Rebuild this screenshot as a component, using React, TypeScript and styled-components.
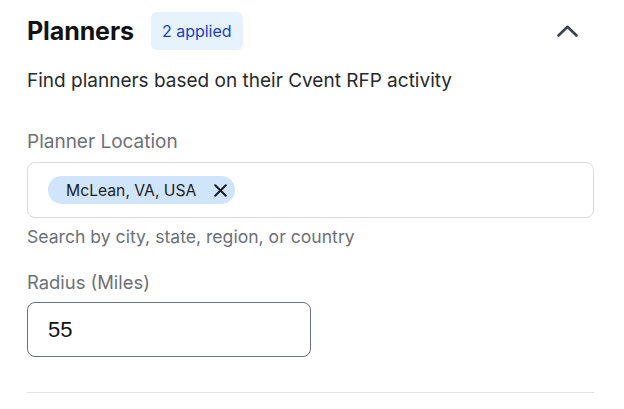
import React, { useState } from 'react';
import styled, { createGlobalStyle } from 'styled-components';

const GlobalStyle = createGlobalStyle`
  * {
    box-sizing: border-box;
  }
  body {
    margin: 0;
    background: #ffffff;
    font-family: Inter, 'Noto Sans', sans-serif;
  }
`;

const Panel = styled.section`
  padding: 12px 30px 0 27px;
  display: flex;
  flex-direction: column;
`;

const Header = styled.div`
  display: flex;
  align-items: center;
  height: 38px;
`;

const Title = styled.h2`
  margin: 0;
  font-size: 25px;
  font-weight: 700;
  color: #111214;
  letter-spacing: -0.1px;
`;

const Badge = styled.span`
  margin-left: 17px;
  height: 38px;
  padding: 0 11px;
  display: inline-flex;
  align-items: center;
  border-radius: 6px;
  background: #e6f3fd;
  color: #1c3ec6;
  font-size: 16px;
`;

const ToggleButton = styled.button`
  margin-left: auto;
  margin-right: 16px;
  border: none;
  background: none;
  padding: 0;
  display: flex;
  cursor: pointer;
`;

const Description = styled.p`
  margin: 19px 0 0;
  font-size: 19px;
  line-height: 24px;
  color: #26292e;
`;

const Field = styled.div<{ $top: number }>`
  margin-top: ${(p) => p.$top}px;
  display: flex;
  flex-direction: column;
`;

const Label = styled.label<{ $size: number }>`
  font-size: ${(p) => p.$size}px;
  line-height: 24px;
  color: #6b7079;
  margin-bottom: 8px;
`;

const TagInput = styled.div`
  height: 56px;
  border: 1.5px solid #d9dbdf;
  border-radius: 8px;
  display: flex;
  align-items: center;
  padding: 0 20px;
`;

const Chip = styled.span`
  height: 28px;
  display: inline-flex;
  align-items: center;
  padding: 0 8px 0 18px;
  border-radius: 14px;
  background: #d0e4fb;
  color: #1c1e22;
  font-size: 15.7px;
`;

const ChipRemove = styled.button`
  margin-left: 18px;
  border: none;
  background: none;
  padding: 0;
  display: flex;
  cursor: pointer;
`;

const Helper = styled.span`
  margin-top: 7px;
  font-size: 17.6px;
  line-height: 24px;
  color: #6b7079;
`;

const NumberInput = styled.input`
  width: 284px;
  height: 55px;
  border: 1.5px solid #6b7079;
  border-radius: 8px;
  padding: 0 20px;
  font-family: 'Liberation Sans', Arial, sans-serif;
  font-size: 22px;
  color: #111;
  outline: none;
`;

const Divider = styled.hr`
  margin: 35px 0 0;
  border: none;
  border-top: 1.5px solid #e2e3e7;
`;

export default function App() {
  const [radius, setRadius] = useState('55');

  return (
    <>
      <GlobalStyle />
      <Panel>
        <Header>
          <Title>Planners</Title>
          <Badge>2 applied</Badge>
          <ToggleButton aria-label="Collapse">
            <svg width="21" height="12" viewBox="0 0 21 12" fill="none">
              <path d="M1.5 10.5 10.5 1.8l9 8.7" stroke="#3b424d" strokeWidth="2.6" strokeLinecap="round" strokeLinejoin="round" />
            </svg>
          </ToggleButton>
        </Header>
        <Description>Find planners based on their Cvent RFP activity</Description>

        <Field $top={37}>
          <Label $size={19}>Planner Location</Label>
          <TagInput>
            <Chip>
              McLean, VA, USA
              <ChipRemove aria-label="Remove">
                <svg width="13" height="13" viewBox="0 0 13 13" fill="none">
                  <path d="M1.2 1.2l10.6 10.6M11.8 1.2 1.2 11.8" stroke="#1c1e22" strokeWidth="2" strokeLinecap="round" />
                </svg>
              </ChipRemove>
            </Chip>
          </TagInput>
          <Helper>Search by city, state, region, or country</Helper>
        </Field>

        <Field $top={21}>
          <Label $size={18.4}>Radius (Miles)</Label>
          <NumberInput value={radius} onChange={(e) => setRadius(e.target.value)} />
        </Field>

        <Divider />
      </Panel>
    </>
  );
}
